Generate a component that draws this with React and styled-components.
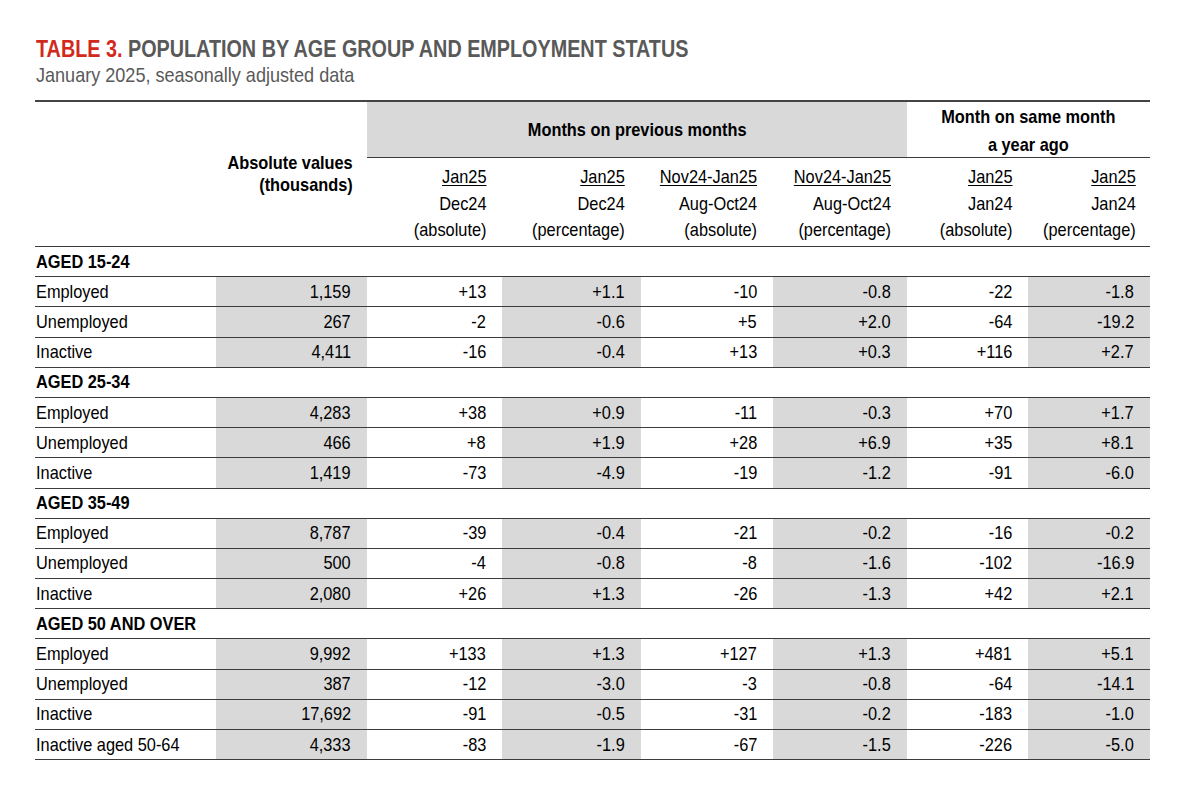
import React from "react";
import styled, { createGlobalStyle } from "styled-components";

const GlobalStyle = createGlobalStyle`
  html, body {
    margin: 0;
    padding: 0;
    background: #fff;
  }
  body {
    font-family: "Liberation Sans", Arial, sans-serif;
    color: #000;
  }
`;

const COLS = "181px 151px 135px 139px 132px 134px 121px 122px";

const sections = [
  {
    title: "AGED 15-24",
    rows: [
      ["Employed", "1,159", "+13", "+1.1", "-10", "-0.8", "-22", "-1.8"],
      ["Unemployed", "267", "-2", "-0.6", "+5", "+2.0", "-64", "-19.2"],
      ["Inactive", "4,411", "-16", "-0.4", "+13", "+0.3", "+116", "+2.7"],
    ],
  },
  {
    title: "AGED 25-34",
    rows: [
      ["Employed", "4,283", "+38", "+0.9", "-11", "-0.3", "+70", "+1.7"],
      ["Unemployed", "466", "+8", "+1.9", "+28", "+6.9", "+35", "+8.1"],
      ["Inactive", "1,419", "-73", "-4.9", "-19", "-1.2", "-91", "-6.0"],
    ],
  },
  {
    title: "AGED 35-49",
    rows: [
      ["Employed", "8,787", "-39", "-0.4", "-21", "-0.2", "-16", "-0.2"],
      ["Unemployed", "500", "-4", "-0.8", "-8", "-1.6", "-102", "-16.9"],
      ["Inactive", "2,080", "+26", "+1.3", "-26", "-1.3", "+42", "+2.1"],
    ],
  },
  {
    title: "AGED 50 AND OVER",
    rows: [
      ["Employed", "9,992", "+133", "+1.3", "+127", "+1.3", "+481", "+5.1"],
      ["Unemployed", "387", "-12", "-3.0", "-3", "-0.8", "-64", "-14.1"],
      ["Inactive", "17,692", "-91", "-0.5", "-31", "-0.2", "-183", "-1.0"],
      ["Inactive aged 50-64", "4,333", "-83", "-1.9", "-67", "-1.5", "-226", "-5.0"],
    ],
  },
];

const subHeads = [
  ["Jan25", "Dec24", "(absolute)"],
  ["Jan25", "Dec24", "(percentage)"],
  ["Nov24-Jan25", "Aug-Oct24", "(absolute)"],
  ["Nov24-Jan25", "Aug-Oct24", "(percentage)"],
  ["Jan25", "Jan24", "(absolute)"],
  ["Jan25", "Jan24", "(percentage)"],
];

// shaded columns: absolute values + every percentage column
const shaded = [false, true, false, true, false, true, false, true];

// no Arial Narrow installed, so squeeze Liberation Sans to its width
const Narrow = styled.span`
  display: inline-block;
  white-space: nowrap;
  transform: scaleX(0.86);
  transform-origin: ${(p) => p.$origin || "left"} center;
`;

const Page = styled.div`
  padding: 36px 0 0 35px;
  width: 1115px;
`;

const Title = styled.h1`
  margin: 0 0 0 1px;
  font-size: 23px;
  line-height: 26px;
  font-weight: bold;
  color: #595959;
  white-space: nowrap;
`;

const Red = styled.span`
  color: #d2291d;
`;

const Subtitle = styled.div`
  margin: 0 0 0 1px;
  font-size: 21px;
  line-height: 25px;
  color: #595959;
`;

const Table = styled.div`
  margin-top: 13px;
  border-top: 2px solid #444;
`;

const Head = styled.div`
  display: grid;
  grid-template-columns: ${COLS};
  grid-template-rows: 56px 88px;
  border-bottom: 1px solid #3c3c3c;
`;

const AbsHead = styled.div`
  grid-column: 2;
  grid-row: 1 / span 2;
  display: flex;
  align-items: center;
  justify-content: flex-end;
  padding: 0 14px 0 0;
  text-align: right;
  font-weight: bold;
  font-size: 19px;
  line-height: 22px;
`;

const GroupHead = styled.div`
  grid-row: 1;
  grid-column: ${(p) => p.$cols};
  display: flex;
  align-items: center;
  justify-content: center;
  padding-top: ${(p) => (p.$shade ? "0" : "3px")};
  text-align: center;
  font-weight: bold;
  font-size: 19px;
  line-height: 28px;
  background: ${(p) => (p.$shade ? "#d9d9d9" : "transparent")};
  border-bottom: 1px solid #3c3c3c;
`;

const SubHead = styled.div`
  grid-row: 2;
  grid-column: ${(p) => p.$col};
  padding: 6px 16px 0 0;
  text-align: right;
  font-size: 19px;
  line-height: 26.5px;
`;

const Under = styled.span`
  text-decoration: underline;
  text-underline-offset: 2px;
  text-decoration-thickness: 1px;
`;

const SectionRow = styled.div`
  height: 30.2px;
  box-sizing: border-box;
  border-bottom: 1px solid #3c3c3c;
  display: flex;
  align-items: center;
  padding-left: 1px;
  font-weight: bold;
  font-size: 19px;
`;

const Row = styled.div`
  display: grid;
  grid-template-columns: ${COLS};
  height: 30.2px;
  box-sizing: border-box;
  border-bottom: 1px solid #3c3c3c;
  font-size: 19px;
`;

const Cell = styled.div`
  display: flex;
  align-items: center;
  justify-content: ${(p) => (p.$label ? "flex-start" : "flex-end")};
  padding: ${(p) => (p.$label ? "0 0 0 1px" : "0 16px 0 0")};
  background: ${(p) => (p.$shade ? "#d9d9d9" : "transparent")};
  white-space: nowrap;
`;

export default function App() {
  return (
    <>
      <GlobalStyle />
      <Page>
        <Title>
          <Narrow>
            <Red>TABLE 3.</Red> POPULATION BY AGE GROUP AND EMPLOYMENT STATUS
          </Narrow>
        </Title>
        <Subtitle>
          <Narrow>January 2025, seasonally adjusted data</Narrow>
        </Subtitle>
        <Table>
          <Head>
            <AbsHead>
              <Narrow $origin="right">
                Absolute values
                <br />
                (thousands)
              </Narrow>
            </AbsHead>
            <GroupHead $cols="3 / span 4" $shade>
              <Narrow $origin="center">Months on previous months</Narrow>
            </GroupHead>
            <GroupHead $cols="7 / span 2">
              <Narrow $origin="center">
                Month on same month
                <br />
                a year ago
              </Narrow>
            </GroupHead>
            {subHeads.map((h, i) => (
              <SubHead key={i} $col={i + 3}>
                <Narrow $origin="right">
                  <Under>{h[0]}</Under>
                  <br />
                  {h[1]}
                  <br />
                  {h[2]}
                </Narrow>
              </SubHead>
            ))}
          </Head>
          {sections.map((s) => (
            <React.Fragment key={s.title}>
              <SectionRow>
                <Narrow>{s.title}</Narrow>
              </SectionRow>
              {s.rows.map((r) => (
                <Row key={s.title + r[0]}>
                  {r.map((v, i) => (
                    <Cell key={i} $label={i === 0} $shade={shaded[i]}>
                      <Narrow $origin={i === 0 ? "left" : "right"}>{v}</Narrow>
                    </Cell>
                  ))}
                </Row>
              ))}
            </React.Fragment>
          ))}
        </Table>
      </Page>
    </>
  );
}
